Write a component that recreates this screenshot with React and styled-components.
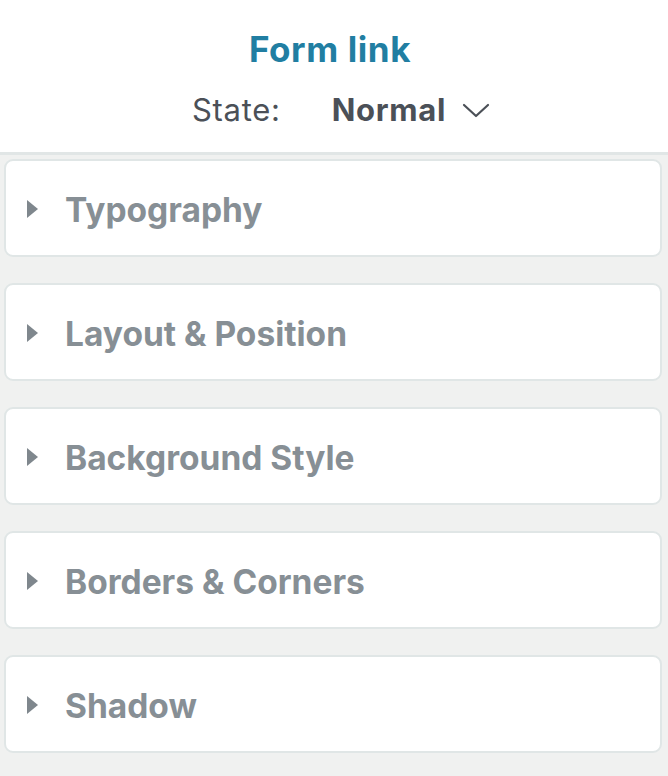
import React from "react";
import styled, { createGlobalStyle } from "styled-components";

const GlobalStyle = createGlobalStyle`
  html, body {
    margin: 0;
    padding: 0;
    background: #f0f1f0;
  }
  body {
    font-family: "Inter", "Liberation Sans", sans-serif;
  }
`;

const Panel = styled.div`
  width: 668px;
  min-height: 776px;
  background: #f0f1f0;
`;

const Header = styled.header`
  background: #ffffff;
  border-bottom: 3px solid #e1e6e6;
  height: 155px;
  box-sizing: border-box;
  display: flex;
  flex-direction: column;
  align-items: center;
  padding-top: 27px;
`;

const Title = styled.h1`
  margin: 0 8px 0 0;
  font-size: 35px;
  font-weight: 700;
  letter-spacing: 0.6px;
  color: #217ea2;
  line-height: 44px;
`;

const StateRow = styled.div`
  display: flex;
  align-items: center;
  margin-top: 19px;
  margin-left: 14px;
  font-size: 31px;
  letter-spacing: 0.7px;
  color: #4b5057;
  line-height: 40px;
`;

const StateLabel = styled.span`
  font-weight: 400;
  margin-right: 51px;
`;

const StateValue = styled.span`
  font-weight: 700;
  margin-right: 16px;
`;

const List = styled.div`
  display: flex;
  flex-direction: column;
  gap: 26px;
  padding: 4px 6px 0 4px;
`;

const Card = styled.div`
  height: 98px;
  box-sizing: border-box;
  background: #ffffff;
  border: 2px solid #e0e6e6;
  border-radius: 9px;
  display: flex;
  align-items: center;
  padding-left: 21px;
`;

const Caret = styled.span`
  width: 0;
  height: 0;
  border-top: 9px solid transparent;
  border-bottom: 9px solid transparent;
  border-left: 11px solid #7f878d;
  margin-right: 27px;
  margin-top: 2px;
`;

const CardTitle = styled.span`
  font-size: 33.5px;
  font-weight: 700;
  color: #878f95;
  margin-top: 3px;
`;

const sections = [
  "Typography",
  "Layout & Position",
  "Background Style",
  "Borders & Corners",
  "Shadow",
];

function Chevron() {
  return (
    <svg width="28" height="16" viewBox="0 0 28 16" fill="none">
      <path d="M2 3 L14 14 L26 3" stroke="#4b5057" strokeWidth="2.2" strokeLinecap="round" strokeLinejoin="round" />
    </svg>
  );
}

export default function App() {
  return (
    <Panel>
      <GlobalStyle />
      <Header>
        <Title>Form link</Title>
        <StateRow>
          <StateLabel>State:</StateLabel>
          <StateValue>Normal</StateValue>
          <Chevron />
        </StateRow>
      </Header>
      <List>
        {sections.map((s) => (
          <Card key={s}>
            <Caret />
            <CardTitle>{s}</CardTitle>
          </Card>
        ))}
      </List>
    </Panel>
  );
}
